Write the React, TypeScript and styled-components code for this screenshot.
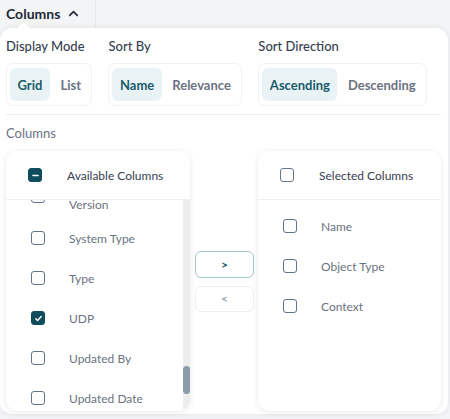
import React from "react";
import styled, { createGlobalStyle } from "styled-components";
import { ChevronUp } from "lucide-react";

const GlobalStyle = createGlobalStyle`
  * { box-sizing: border-box; }
  html, body {
    margin: 0;
    padding: 0;
    background: #f3f4f6;
    font-family: Lato, "Liberation Sans", sans-serif;
    -webkit-font-smoothing: antialiased;
  }
`;

const TEAL = "#0f4c5c";

/* -------------------- TOOLBAR -------------------- */
const Page = styled.div`
  width: 450px;
  height: 419px;
  overflow: hidden;
  display: flex;
  flex-direction: column;
`;

const Toolbar = styled.div`
  height: 28px;
  display: flex;
  align-items: stretch;
`;

const ToolbarButton = styled.div`
  width: 96px;
  display: flex;
  align-items: center;
  gap: 6px;
  padding: 0 0 2px 6px;
  border-right: 1px solid #e5e7eb;
  font-size: 14px;
  font-weight: 700;
  color: #1f2937;
`;

/* -------------------- POPOVER -------------------- */
const Panel = styled.div`
  position: relative;
  width: 448px;
  height: 386px;
  background: #fff;
  border-radius: 12px;
  box-shadow: 0 0 6px rgba(15, 23, 42, 0.08);
  padding: 9px 7px 4px 6px;
  display: flex;
  flex-direction: column;

  &::before {
    content: "";
    position: absolute;
    top: -4px;
    left: 19px;
    width: 9px;
    height: 9px;
    background: #fff;
    transform: rotate(45deg);
    border-radius: 2px;
  }
`;

const OptionsRow = styled.div`
  display: flex;
  gap: 16px;
  padding-bottom: 8px;
  border-bottom: 1px solid #eceef1;
`;

const OptionGroup = styled.div`
  display: flex;
  flex-direction: column;
  gap: 8px;
`;

const Label = styled.div<{ $muted?: boolean }>`
  font-size: 13px;
  line-height: 18px;
  font-weight: ${(p) => (p.$muted ? 400 : 500)};
  color: ${(p) => (p.$muted ? "#6b7280" : "#374151")};
`;

const Segmented = styled.div`
  display: flex;
  gap: 3px;
  padding: 4px 3px;
  border: 1px solid #f0f2f4;
  border-radius: 7px;
  height: 43px;
  align-self: flex-start;
`;

const SegButton = styled.div<{ $active?: boolean }>`
  display: flex;
  align-items: center;
  padding: 0 7.5px;
  border-radius: 6px;
  font-size: 13px;
  font-weight: 700;
  background: ${(p) => (p.$active ? "#e9f2f4" : "transparent")};
  color: ${(p) => (p.$active ? "#1a5c6b" : "#6b7280")};
`;

const ColumnsSection = styled.div`
  display: flex;
  flex-direction: column;
  gap: 9px;
  padding-top: 9px;
  flex: 1;
  min-height: 0;
`;

const Transfer = styled.div`
  display: flex;
  height: 260px;
`;

const Card = styled.div<{ $width: number }>`
  width: ${(p) => p.$width}px;
  background: #fff;
  border-radius: 12px;
  box-shadow: 0 1px 6px rgba(15, 23, 42, 0.09);
  display: flex;
  flex-direction: column;
  overflow: hidden;
`;

const CardHeader = styled.div`
  position: relative;
  z-index: 1;
  height: 49px;
  flex-shrink: 0;
  display: flex;
  align-items: center;
  gap: 25px;
  padding-left: 22px;
  background: #fff;
  border-bottom: 1px solid #eef0f2;
  font-size: 12px;
  color: #374151;
`;

const ListArea = styled.div`
  flex: 1;
  min-height: 0;
  display: flex;
  overflow: hidden;
`;

const Rows = styled.div`
  flex: 1;
  overflow: hidden;
  display: flex;
  flex-direction: column;
`;

const RowsInner = styled.div<{ $offset: number }>`
  margin-top: ${(p) => p.$offset}px;
  flex-shrink: 0;
`;

const Row = styled.div`
  min-height: 40px;
  padding: 5.5px 12px 5.5px 25px;
  display: flex;
  align-items: center;
  gap: 24px;
  font-size: 12px;
  line-height: 17px;
  color: #6b7280;
`;

/* the first visible item is a two-line label whose first line sits under the header */
const RowText = styled.span<{ $wrapped?: boolean }>`
  max-width: 96px;
  padding-top: ${(p) => (p.$wrapped ? 17 : 0)}px;
`;

const Track = styled.div`
  width: 7px;
  background: #ededed;
  display: flex;
  flex-direction: column;
`;

const Thumb = styled.div`
  margin-top: 166px;
  height: 28px;
  border-radius: 4px;
  background: #8e9bab;
`;

const Middle = styled.div`
  width: 68px;
  display: flex;
  flex-direction: column;
  align-items: center;
  justify-content: center;
  gap: 8px;
  padding-left: 1px;
`;

const MoveButton = styled.div<{ $disabled?: boolean }>`
  width: 59px;
  height: ${(p) => (p.$disabled ? 26 : 27)}px;
  display: flex;
  align-items: center;
  justify-content: center;
  border-radius: 6px;
  border: 1px solid ${(p) => (p.$disabled ? "#eef0f2" : "#a3c7cf")};
  font-size: 12px;
  font-weight: 700;
  color: ${(p) => (p.$disabled ? "#a0a8b3" : "#1a5c6b")};
`;

const Box = styled.span<{ $state?: "on" | "mixed" }>`
  width: 14px;
  height: 14px;
  flex-shrink: 0;
  border-radius: 3px;
  border: 1.5px solid ${(p) => (p.$state ? TEAL : "#64748b")};
  background: ${(p) => (p.$state ? TEAL : "#fff")};
  display: flex;
  align-items: center;
  justify-content: center;
`;

const Checkbox = ({ state }: { state?: "on" | "mixed" }) => (
  <Box $state={state}>
    {state === "on" && (
      <svg width="9" height="9" viewBox="0 0 10 10">
        <path d="M2 5.2l2 2 4-4.4" fill="none" stroke="#fff" strokeWidth="1.6" strokeLinecap="round" strokeLinejoin="round" />
      </svg>
    )}
    {state === "mixed" && (
      <svg width="9" height="9" viewBox="0 0 10 10">
        <path d="M2.2 5h5.6" stroke="#fff" strokeWidth="1.8" strokeLinecap="round" />
      </svg>
    )}
  </Box>
);

const available: { name: string; checked?: boolean; wrapped?: boolean }[] = [
  { name: "Version", wrapped: true },
  { name: "System Type" },
  { name: "Type" },
  { name: "UDP", checked: true },
  { name: "Updated By" },
  { name: "Updated Date" },
];

const selected = ["Name", "Object Type", "Context"];

export default function App() {
  return (
    <Page>
      <GlobalStyle />
      <Toolbar>
        <ToolbarButton>
          Columns
          <ChevronUp size={15} strokeWidth={2.6} color="#1f2937" />
        </ToolbarButton>
      </Toolbar>

      <Panel>
        <OptionsRow>
          <OptionGroup>
            <Label>Display Mode</Label>
            <Segmented>
              <SegButton $active>Grid</SegButton>
              <SegButton>List</SegButton>
            </Segmented>
          </OptionGroup>
          <OptionGroup>
            <Label>Sort By</Label>
            <Segmented>
              <SegButton $active>Name</SegButton>
              <SegButton>Relevance</SegButton>
            </Segmented>
          </OptionGroup>
          <OptionGroup>
            <Label>Sort Direction</Label>
            <Segmented>
              <SegButton $active>Ascending</SegButton>
              <SegButton>Descending</SegButton>
            </Segmented>
          </OptionGroup>
        </OptionsRow>

        <ColumnsSection>
          <Label $muted>Columns</Label>
          <Transfer>
            <Card $width={184}>
              <CardHeader>
                <Checkbox state="mixed" />
                Available Columns
              </CardHeader>
              <ListArea>
                <Rows>
                  <RowsInner $offset={-27}>
                    {available.map((c) => (
                      <Row key={c.name}>
                        <Checkbox state={c.checked ? "on" : undefined} />
                        <RowText $wrapped={c.wrapped}>{c.name}</RowText>
                      </Row>
                    ))}
                  </RowsInner>
                </Rows>
                <Track>
                  <Thumb />
                </Track>
              </ListArea>
            </Card>

            <Middle>
              <MoveButton>&gt;</MoveButton>
              <MoveButton $disabled>&lt;</MoveButton>
            </Middle>

            <Card $width={183}>
              <CardHeader>
                <Checkbox />
                Selected Columns
              </CardHeader>
              <ListArea>
                <Rows>
                  <RowsInner $offset={6}>
                    {selected.map((c) => (
                      <Row key={c}>
                        <Checkbox />
                        <RowText>{c}</RowText>
                      </Row>
                    ))}
                  </RowsInner>
                </Rows>
              </ListArea>
            </Card>
          </Transfer>
        </ColumnsSection>
      </Panel>
    </Page>
  );
}
